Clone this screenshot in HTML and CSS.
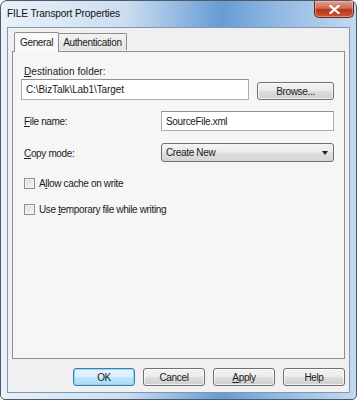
FILE: index.html
```html
<!DOCTYPE html>
<html lang="en">
<head>
    <meta charset="UTF-8">
    <title>FILE Transport Properties</title>
    <link rel="stylesheet" href="styles.css">
</head>
<body>
    <div class="window">
        <div class="titlebar">
            <span class="title">FILE Transport Properties</span>
            <button class="close" title="Close">
                <svg width="11" height="9" viewBox="0 0 11 9">
                    <path d="M1.5 1 L9.5 8 M9.5 1 L1.5 8" stroke="#fff" stroke-width="2.2" stroke-linecap="square"/>
                </svg>
            </button>
        </div>

        <div class="client">
            <div class="tabs">
                <div class="tab active">General</div>
                <div class="tab">Authentication</div>
            </div>

            <div class="panel">
                <label class="label label-dest"><u>D</u>estination folder:</label>
                <div class="row-folder">
                    <div class="input wide">C:\BizTalk\Lab1\Target</div>
                    <button class="btn browse">Browse...</button>
                </div>

                <div class="row">
                    <label class="label"><u>F</u>ile name:</label>
                    <div class="input field">SourceFile.xml</div>
                </div>

                <div class="row row-copy">
                    <label class="label"><u>C</u>opy mode:</label>
                    <div class="select field">
                        <span>Create New</span>
                        <span class="arrow"></span>
                    </div>
                </div>

                <div class="check first">
                    <span class="box"></span>
                    <span>A<u>l</u>low cache on write</span>
                </div>
                <div class="check">
                    <span class="box"></span>
                    <span>Use <u>t</u>emporary file while writing</span>
                </div>
            </div>

            <div class="buttons">
                <button class="btn default">OK</button>
                <button class="btn">Cancel</button>
                <button class="btn"><u>A</u>pply</button>
                <button class="btn">Help</button>
            </div>
        </div>
    </div>
</body>
</html>
```

FILE: styles.css
```css
* {
    margin: 0;
    padding: 0;
    box-sizing: border-box;
}

body {
    background: #ffffff;
    font-family: 'Liberation Sans', Arial, sans-serif;
    font-size: 10px;
    letter-spacing: -0.35px;
    color: #1a1a1a;
}

u {
    text-decoration: underline;
    text-underline-offset: 1px;
}

/* Window frame */
.window {
    width: 357px;
    height: 400px;
    border: 1px solid #4e5a67;
    border-radius: 7px 7px 5px 5px;
    background:
        linear-gradient(90deg, rgba(236, 243, 250, 0.95) 0%, rgba(214, 229, 244, 0.7) 35%, rgba(70, 135, 205, 0.7) 62%, rgba(110, 165, 220, 0.5) 78%, rgba(205, 224, 243, 0.6) 100%),
        #b4cde8;
    display: flex;
    flex-direction: column;
    padding: 0 6px 6px;
    overflow: hidden;
}

.titlebar {
    height: 26px;
    display: flex;
    align-items: flex-start;
    justify-content: space-between;
    margin: 0 -4px 0 0;
}

.title {
    padding-top: 7px;
    font-size: 10.2px;
    letter-spacing: -0.15px;
    color: #111;
}

.close {
    width: 40px;
    height: 17px;
    border: 1px solid #5b2a22;
    border-top: none;
    border-radius: 0 0 5px 5px;
    background: linear-gradient(#e0a190 0%, #cf6a50 45%, #b8341c 55%, #c9583c 100%);
    display: flex;
    align-items: center;
    justify-content: center;
    box-shadow: inset 0 0 0 1px rgba(255, 210, 200, 0.45);
}

.client {
    flex: 1;
    border: 1px solid #7f98b6;
    background: #f0f0f0;
    padding: 3px 4px 0 4px;
    display: flex;
    flex-direction: column;
}

/* Tabs */
.tabs {
    display: flex;
    align-items: flex-end;
    padding-left: 2px;
    height: 20px;
    position: relative;
    z-index: 1;
}

.tab {
    height: 17px;
    padding: 3px 4px 0;
    border: 1px solid #8c8e94;
    border-bottom: none;
    border-radius: 2px 2px 0 0;
    background: linear-gradient(#f3f3f3, #e3e3e3);
    margin-bottom: 1px;
}

.tab.active {
    height: 20px;
    padding: 4px 5px 0 5px;
    background: #f8f8f8;
    margin-bottom: -1px;
    margin-right: -1px;
    position: relative;
    z-index: 2;
}

.panel {
    height: 308px;
    border: 1px solid #8c8e94;
    background: #f6f6f6;
    padding: 13px 10px 0 8px;
}

.label {
    display: block;
    margin-left: 3px;
    line-height: 13px;
}

.label-dest {
    letter-spacing: 0.05px;
}

.input {
    height: 21px;
    border: 1px solid #abadb3;
    border-top-color: #8e9095;
    background: #ffffff;
    padding: 4px 4px 0;
}

.row-folder {
    display: flex;
    align-items: flex-start;
    margin-top: 1px;
}

.wide {
    width: 228px;
    letter-spacing: -0.1px;
}

.browse {
    margin-left: auto;
    margin-top: 3px;
    width: 77px;
}

.row {
    display: flex;
    align-items: center;
    margin-top: 11px;
}

.row .label {
    flex: 1;
    padding-top: 1px;
}

.field {
    width: 173px;
    height: 20px;
}

.row-copy {
    margin-top: 12px;
}

.select {
    height: 19px;
    border: 1px solid #707070;
    border-radius: 3px;
    background: linear-gradient(#f4f4f4 0%, #ebebeb 48%, #dddddd 52%, #d6d6d6 100%);
    display: flex;
    align-items: center;
    justify-content: space-between;
    padding: 0 5px 0 4px;
}

.arrow {
    width: 0;
    height: 0;
    border-left: 3.5px solid transparent;
    border-right: 3.5px solid transparent;
    border-top: 4px solid #222;
}

.check {
    display: flex;
    align-items: center;
    gap: 4px;
    margin-left: 3px;
    margin-top: 15px;
}

.check.first {
    margin-top: 16px;
}

.box {
    width: 11px;
    height: 11px;
    border: 1px solid #8e8f8f;
    background: linear-gradient(135deg, #dcdcdc, #f6f6f6);
    box-shadow: inset 0 0 0 1px #f4f4f4;
}

/* Buttons */
.btn {
    height: 18px;
    font-family: inherit;
    font-size: inherit;
    letter-spacing: inherit;
    color: #1a1a1a;
    border: 1px solid #707070;
    border-radius: 3px;
    background: linear-gradient(#f2f2f2 0%, #ebebeb 48%, #dddddd 52%, #cfcfcf 100%);
    box-shadow: inset 0 0 0 1px rgba(255, 255, 255, 0.7);
}

.buttons {
    display: flex;
    justify-content: flex-end;
    gap: 8px;
    margin-top: 9px;
}

.buttons .btn {
    width: 62px;
}

.btn.default {
    border-color: #3c7fb1;
    background: linear-gradient(#eaf6fd 0%, #d9f0fc 48%, #bee6fd 52%, #a7d9f5 100%);
    box-shadow: inset 0 0 0 1px #9ed3f0;
}
```
